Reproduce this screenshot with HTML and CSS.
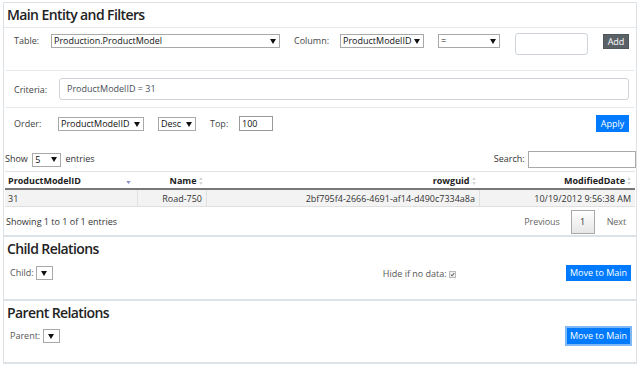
FILE: index.html
```html
<!DOCTYPE html>
<html>
<head>
<meta charset="utf-8">
<link rel="stylesheet" href="styles.css">
</head>
<body>
<div class="page">
  <section class="card main">
    <h2 class="title">Main Entity and Filters</h2>
    <div class="row filters">
      <span class="lbl lbl-table">Table:</span>
      <span class="select sel-table"><span class="val">Production.ProductModel</span><svg class="arr" viewBox="0 0 6 5"><path d="M0 0H6L3 5Z"/></svg></span>
      <span class="lbl lbl-col">Column:</span>
      <span class="select sel-col"><span class="val">ProductModelID</span><svg class="arr" viewBox="0 0 6 5"><path d="M0 0H6L3 5Z"/></svg></span>
      <span class="select sel-op"><span class="val">=</span><svg class="arr" viewBox="0 0 6 5"><path d="M0 0H6L3 5Z"/></svg></span>
      <span class="input in-val"></span>
      <span class="btn btn-dark">Add</span>
    </div>
    <div class="row criteria">
      <span class="lbl lbl-crit">Criteria:</span>
      <span class="input in-crit">ProductModelID = 31</span>
    </div>
    <div class="row order">
      <span class="lbl lbl-order">Order:</span>
      <span class="select sel-ord"><span class="val">ProductModelID</span><svg class="arr" viewBox="0 0 6 5"><path d="M0 0H6L3 5Z"/></svg></span>
      <span class="select sel-dir"><span class="val">Desc</span><svg class="arr" viewBox="0 0 6 5"><path d="M0 0H6L3 5Z"/></svg></span>
      <span class="lbl lbl-top">Top:</span>
      <span class="input in-top">100</span>
      <span class="btn btn-blue btn-apply">Apply</span>
    </div>
    <div class="dt-top">
      <span class="len">Show <span class="select sel-len"><span class="val">5</span><svg class="arr" viewBox="0 0 6 5"><path d="M0 0H6L3 5Z"/></svg></span> entries</span>
      <span class="search">Search: <span class="input in-search"></span></span>
    </div>
    <table class="grid">
      <thead>
        <tr>
          <th class="c1">ProductModelID<svg class="sort sort-desc" viewBox="0 0 6 4"><path d="M0 0H6L3 4Z"/></svg></th>
          <th class="c2">Name<svg class="sort" viewBox="0 0 4 9"><path d="M2 0L4 3.5H0Z M2 9L4 5.5H0Z"/></svg></th>
          <th class="c3">rowguid<svg class="sort" viewBox="0 0 4 9"><path d="M2 0L4 3.5H0Z M2 9L4 5.5H0Z"/></svg></th>
          <th class="c4">ModifiedDate<svg class="sort" viewBox="0 0 4 9"><path d="M2 0L4 3.5H0Z M2 9L4 5.5H0Z"/></svg></th>
        </tr>
      </thead>
      <tbody>
        <tr>
          <td class="c1">31</td>
          <td class="c2">Road-750</td>
          <td class="c3">2bf795f4-2666-4691-af14-d490c7334a8a</td>
          <td class="c4">10/19/2012 9:56:38 AM</td>
        </tr>
      </tbody>
    </table>
    <div class="dt-bottom">
      <span class="info">Showing 1 to 1 of 1 entries</span>
      <span class="pager"><span class="pg">Previous</span><span class="pg cur">1</span><span class="pg">Next</span></span>
    </div>
  </section>
  <section class="card child">
    <h2 class="title">Child Relations</h2>
    <div class="rel-row">
      <span class="rel-left">Child: <span class="select sel-empty"><svg class="arr" viewBox="0 0 6 5"><path d="M0 0H6L3 5Z"/></svg></span></span>
      <span class="hide">Hide if no data: <span class="chk"><svg viewBox="0 0 6 6"><path d="M1 3.2L2.5 4.6L5 1.4" fill="none" stroke="#333" stroke-width="1.1"/></svg></span></span>
      <span class="btn btn-blue btn-move">Move to Main</span>
    </div>
  </section>
  <section class="card parent">
    <h2 class="title">Parent Relations</h2>
    <div class="rel-row">
      <span class="rel-left">Parent: <span class="select sel-empty"><svg class="arr" viewBox="0 0 6 5"><path d="M0 0H6L3 5Z"/></svg></span></span>
      <span class="btn btn-blue btn-move focus">Move to Main</span>
    </div>
  </section>
</div>
</body>
</html>
```

FILE: styles.css
```css
html, body {
  margin: 0;
  padding: 0;
  background: #fff;
}
body {
  font-family: "Open Sans", "Noto Sans", sans-serif;
  font-size: 9px;
  color: #333;
}
.page {
  width: 634px;
  margin: 2px 0 0 3px;
}
.card {
  border: 1px solid #dde2e7;
  border-bottom-width: 2px;
  box-sizing: border-box;
}
.card + .card {
  border-top: 0;
}
.main { height: 235px; }
.child { height: 64px; }
.parent { height: 63px; }
.title {
  margin: 0;
  font-size: 14px;
  font-weight: 600;
  color: #222;
  line-height: 24px;
  padding-left: 3px;
  letter-spacing: -0.6px;
}
.main .title {
  border-bottom: 1px solid #e6e9ec;
}
.row {
  display: flex;
  align-items: flex-start;
  border-bottom: 1px solid #e6e9ec;
  margin: 0 2px;
}
.lbl {
  color: #444;
}
.filters {
  height: 43px;
  padding-top: 6px;
  box-sizing: border-box;
}
.filters .lbl { line-height: 14px; }
.lbl-table { margin-left: 8px; width: 37px; }
.lbl-col { margin-left: 14px; width: 46px; }
.select {
  display: inline-flex;
  align-items: center;
  justify-content: space-between;
  box-sizing: border-box;
  height: 14px;
  border: 1px solid #a9a9a9;
  background: #fff;
  padding: 0 3px 0 2px;
  color: #111;
  line-height: 12px;
  vertical-align: middle;
}
.arr {
  width: 6px;
  height: 5px;
  fill: #111;
  flex: none;
}
.sel-table { width: 229px; }
.sel-col { width: 84px; }
.sel-op { width: 62px; margin-left: 14px; }
.input {
  display: inline-block;
  box-sizing: border-box;
  border: 1px solid #ced4da;
  background: #fff;
}
.in-val {
  width: 73px;
  height: 22px;
  margin-left: 15px;
  margin-top: -1px;
  border-radius: 3px;
}
.btn {
  display: inline-block;
  color: #fff;
  text-align: center;
  box-sizing: border-box;
}
.btn-dark {
  background: #5a6268;
  border: 1px solid #4e555b;
  width: 26px;
  height: 15px;
  line-height: 13px;
  margin-left: 15px;
}
.criteria {
  height: 36px;
  align-items: center;
}
.lbl-crit { margin-left: 8px; width: 45px; }
.in-crit {
  flex: 1;
  margin-right: 5px;
  height: 22px;
  border-radius: 3px;
  line-height: 20px;
  padding-left: 7px;
  color: #495057;
}
.order {
  height: 40px;
  padding-top: 9px;
  box-sizing: border-box;
  border-bottom: 0;
}
.order .lbl { line-height: 14px; }
.lbl-order { margin-left: 8px; width: 44px; }
.sel-ord { width: 86px; }
.sel-dir { width: 38px; margin-left: 14px; }
.lbl-top { margin-left: 14px; width: 29px; }
.in-top {
  width: 34px;
  height: 15px;
  border-color: #999;
  line-height: 13px;
  padding-left: 2px;
  color: #111;
  margin-top: -1px;
}
.btn-blue {
  background: #007bff;
  border: 1px solid #007bff;
}
.btn-apply {
  margin-left: auto;
  margin-right: 5px;
  width: 33px;
  height: 17px;
  line-height: 15px;
  margin-top: -2px;
}
.dt-top {
  display: flex;
  justify-content: space-between;
  align-items: center;
  height: 23px;
  padding: 0 0 0 1px;
  margin-top: 0;
}
.sel-len { width: 29px; margin: 0 2px; }
.in-search {
  width: 108px;
  height: 17px;
  border-color: #aaa;
  vertical-align: middle;
  margin-left: 1px;
}
.grid {
  width: 630px;
  margin-left: 1px;
  border-collapse: collapse;
  border-top: 1px solid #e2e2e2;
}
.grid th {
  font-weight: 700;
  color: #222;
  height: 16px;
  padding: 0 4px 0 3px;
  border-bottom: 2px solid #777;
  text-align: right;
  white-space: nowrap;
}
.grid th.c1 { text-align: left; }
.grid td {
  background: #f3f3f3;
  height: 16px;
  padding: 0 4px 0 3px;
  border-left: 1px solid #e0e0e0;
  border-bottom: 1px solid #e0e0e0;
  text-align: right;
  white-space: nowrap;
}
.grid td.c1 { text-align: left; border-left: 0; }
.c1 { width: 125px; }
.c2 { width: 61px; }
.c3 { width: 265px; }
.sort {
  width: 4px;
  height: 8px;
  fill: #d5d5d5;
  margin-left: 2px;
  vertical-align: -1px;
}
.sort-desc {
  width: 5px;
  height: 3px;
  fill: #8a8fd0;
  float: right;
  margin-top: 7px;
  margin-right: 3px;
}
.dt-bottom {
  display: flex;
  justify-content: space-between;
  align-items: center;
  height: 29px;
  padding-left: 2px;
}
.pager {
  display: flex;
  align-items: center;
  margin-right: 10px;
  color: #666;
  letter-spacing: -0.1px;
}
.pg { padding: 0; }
.pg.cur {
  color: #333;
  border: 1px solid #aaa;
  background: linear-gradient(#fff, #e6e6e6);
  height: 24px;
  line-height: 22px;
  width: 24px;
  box-sizing: border-box;
  text-align: center;
  margin: 0 12px 0 11px;
}
.rel-row {
  display: flex;
  align-items: center;
  height: 24px;
  padding: 0 5px 0 6px;
}
.rel-left { color: #555; }
.sel-empty { width: 17px; justify-content: center; margin-left: 0; }
.hide {
  margin-left: auto;
  margin-right: 110px;
  color: #555;
}
.chk {
  display: inline-block;
  width: 7px;
  height: 7px;
  border: 1px solid #bbb;
  background: #eee;
  vertical-align: middle;
  box-sizing: border-box;
}
.chk svg { display: block; width: 5px; height: 5px; }
.btn-move {
  width: 65px;
  height: 16px;
  line-height: 14px;
  font-size: 9px;
}
.parent .rel-row { height: 22px; }
.parent .btn-move { margin-left: auto; }
.btn-move.focus {
  width: 67px;
  height: 20px;
  line-height: 16px;
  border: 2px solid #7fb8f5;
  margin-right: -1px;
}
```
